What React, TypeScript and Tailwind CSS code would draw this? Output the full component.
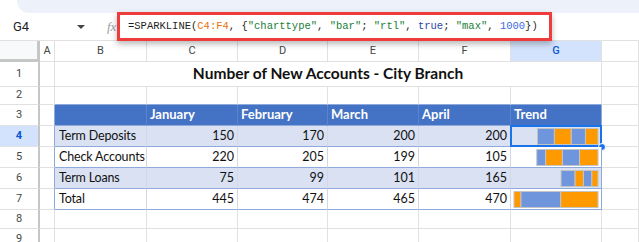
import React from "react"

const COLS = [40, 15, 92, 91, 90, 91, 92, 91]
const LETTERS = ["A", "B", "C", "D", "E", "F", "G"]
const MONTHS = ["January", "February", "March", "April"]

const DATA = [
  { label: "Term Deposits", values: [150, 170, 200, 200], band: true },
  { label: "Check Accounts", values: [220, 205, 199, 105], band: false },
  { label: "Term Loans", values: [75, 99, 101, 165], band: true },
  { label: "Total", values: [445, 474, 465, 470], band: false },
]

const ORANGE = "#ff9900"
const BLUE = "#6f96dc"

function Sparkline({ values }: { values: number[] }) {
  // rtl bar chart, max 1000, drawn into an 84px track
  const scale = 84 / 1000
  let right = 87
  const segs: { x: number; w: number; c: string }[] = []
  values.forEach((v, i) => {
    const w = v * scale
    let x = right - w
    if (x < 3) x = 3
    if (right > 3) segs.push({ x, w: right - x, c: i % 2 === 0 ? ORANGE : BLUE })
    right -= w
  })
  return (
    <svg width="90" height="20" className="block">
      {segs.map((s, i) => (
        <rect key={i} x={s.x} y={2.5} width={s.w} height={16} fill={s.c} stroke="#c4c4c4" strokeWidth={1} />
      ))}
    </svg>
  )
}

function RowHeader({ n, h, active }: { n: number; h: string; active?: boolean }) {
  return (
    <div
      className={`${h} w-[40px] shrink-0 flex items-center justify-center border-r-2 border-b border-r-[#c4c7c5] border-b-[#e1e1e1] text-[11px] font-['Roboto',sans-serif] ${
        active ? "bg-[#d3e3fd] text-[#0b57d0] font-bold" : "bg-white text-[#444746]"
      }`}
    >
      {n}
    </div>
  )
}

const cellBase = "shrink-0 border-r border-b border-[#e1e1e1]"

export default function App() {
  return (
    <div className="w-[639px] h-[242px] overflow-hidden bg-white relative font-['Lato',sans-serif] text-[#111] whitespace-nowrap">
      {/* toolbar strip */}
      <div className="h-[13px] ml-[17px] bg-[#edf2fa] rounded-bl-[12px]" />

      {/* formula bar */}
      <div className="h-[27px] flex items-center relative z-10">
        <div className="w-[70px] pl-[13px] text-[13px] font-['Roboto',sans-serif] text-[#1f1f1f]">G4</div>
        <div className="w-0 h-0 border-l-[4px] border-r-[4px] border-t-[4px] border-l-transparent border-r-transparent border-t-[#444746] ml-[7px]" />
        <div className="ml-[22px] w-[11px] overflow-visible text-[13px] italic font-['Liberation_Serif',serif] text-[#9aa0a6]">fx</div>
        <div className="ml-[-1px] h-[29px] w-[435px] border-[3px] border-[#ee3b3b] bg-white shadow-[0_3px_6px_rgba(0,0,0,0.28)] flex items-center pl-[8px] font-['Liberation_Mono',monospace] text-[10.5px] whitespace-pre text-[#1f1f1f]">
          <span>=SPARKLINE(</span>
          <span className="text-[#e8710a]">C4:F4</span>
          <span>, {"{"}</span>
          <span className="text-[#188038]">"charttype"</span>
          <span>, </span>
          <span className="text-[#188038]">"bar"</span>
          <span>; </span>
          <span className="text-[#188038]">"rtl"</span>
          <span>, </span>
          <span className="text-[#2a47a8]">true</span>
          <span>; </span>
          <span className="text-[#188038]">"max"</span>
          <span>, </span>
          <span className="text-[#3a6ae0]">1000</span>
          <span>{"})"}</span>
        </div>
      </div>

      {/* column headers */}
      <div className="h-[22px] flex border-t border-[#e1e1e1]">
        <div className="w-[40px] shrink-0 bg-[#f8f9fa] border-r-[3px] border-b-[3px] border-[#c4c7c5]" />
        {LETTERS.map((l, i) => (
          <div
            key={l}
            style={{ width: COLS[i + 1] }}
            className={`${cellBase} flex items-center justify-center text-[11px] font-['Roboto',sans-serif] ${
              l === "G" ? "bg-[#d3e3fd] text-[#0b57d0] font-medium" : "text-[#444746]"
            }`}
          >
            {l}
          </div>
        ))}
        <div className={`${cellBase} flex-1`} />
      </div>

      {/* row 1: title */}
      <div className="flex">
        <RowHeader n={1} h="h-[25px]" />
        <div className={`${cellBase} w-[15px]`} />
        <div className={`${cellBase} w-[547px] flex items-center justify-center text-[15.5px] font-bold`}>
          Number of New Accounts - City Branch
        </div>
        <div className={`${cellBase} flex-1`} />
      </div>

      {/* row 2 */}
      <div className="flex">
        <RowHeader n={2} h="h-[18px]" />
        {COLS.slice(1).map((w, i) => (
          <div key={i} style={{ width: w }} className={`${cellBase} ${i === 0 ? "" : "border-b-[#8eaadb]"}`} />
        ))}
        <div className={`${cellBase} flex-1`} />
      </div>

      {/* row 3: table header */}
      <div className="flex">
        <RowHeader n={3} h="h-[21px]" />
        <div className={`${cellBase} w-[15px] border-r-[#8eaadb]`} />
        <div className="w-[92px] shrink-0 bg-[#4472c4] border-b border-r border-b-[#8eaadb] border-r-[#5b82cc]" />
        {MONTHS.map((m, i) => (
          <div
            key={m}
            style={{ width: COLS[i + 3] }}
            className="shrink-0 bg-[#4472c4] border-b border-r border-b-[#8eaadb] border-r-[#5b82cc] flex items-center pl-[3px] text-white font-bold text-[13px]"
          >
            {m}
          </div>
        ))}
        <div className="w-[91px] shrink-0 bg-[#4472c4] border-b border-r border-[#8eaadb] flex items-center pl-[3px] text-white font-bold text-[13px]">
          Trend
        </div>
        <div className={`${cellBase} flex-1`} />
      </div>

      {/* data rows */}
      {DATA.map((r, ri) => (
        <div key={r.label} className="flex">
          <RowHeader n={ri + 4} h="h-[21px]" active={ri === 0} />
          <div className={`${cellBase} w-[15px] border-r-[#8eaadb]`} />
          <div
            className={`w-[92px] shrink-0 overflow-hidden border-b border-r border-b-[#8eaadb] border-r-[#d4d8e0] flex items-center pl-[4px] text-[12.5px] tracking-[-0.15px] ${
              r.band ? "bg-[#d9e1f2]" : "bg-white"
            }`}
          >
            {r.label}
          </div>
          {r.values.map((v, i) => (
            <div
              key={i}
              style={{ width: COLS[i + 3] }}
              className={`shrink-0 border-b border-r border-b-[#8eaadb] border-r-[#d4d8e0] flex items-center justify-end pr-[3px] text-[12.5px] ${
                r.band ? "bg-[#d9e1f2]" : "bg-white"
              }`}
            >
              {v}
            </div>
          ))}
          <div
            className={`w-[91px] shrink-0 border-b border-r border-[#8eaadb] relative ${r.band ? "bg-[#d9e1f2]" : "bg-white"}`}
          >
            <Sparkline values={r.values} />
            {ri === 0 && (
              <>
                <div className="absolute -inset-[1px] border-2 border-[#1a73e8]" />
                <div className="absolute -right-[5px] -bottom-[5px] w-[8px] h-[8px] rounded-full bg-[#1a73e8] border border-white" />
              </>
            )}
          </div>
          <div className={`${cellBase} flex-1`} />
        </div>
      ))}

      {/* rows 8, 9 */}
      {[8, 9].map((n) => (
        <div key={n} className="flex">
          <RowHeader n={n} h={n === 8 ? "h-[19px]" : "h-[21px]"} />
          {COLS.slice(1).map((w, i) => (
            <div key={i} style={{ width: w }} className={cellBase} />
          ))}
          <div className={`${cellBase} flex-1`} />
        </div>
      ))}
    </div>
  )
}
